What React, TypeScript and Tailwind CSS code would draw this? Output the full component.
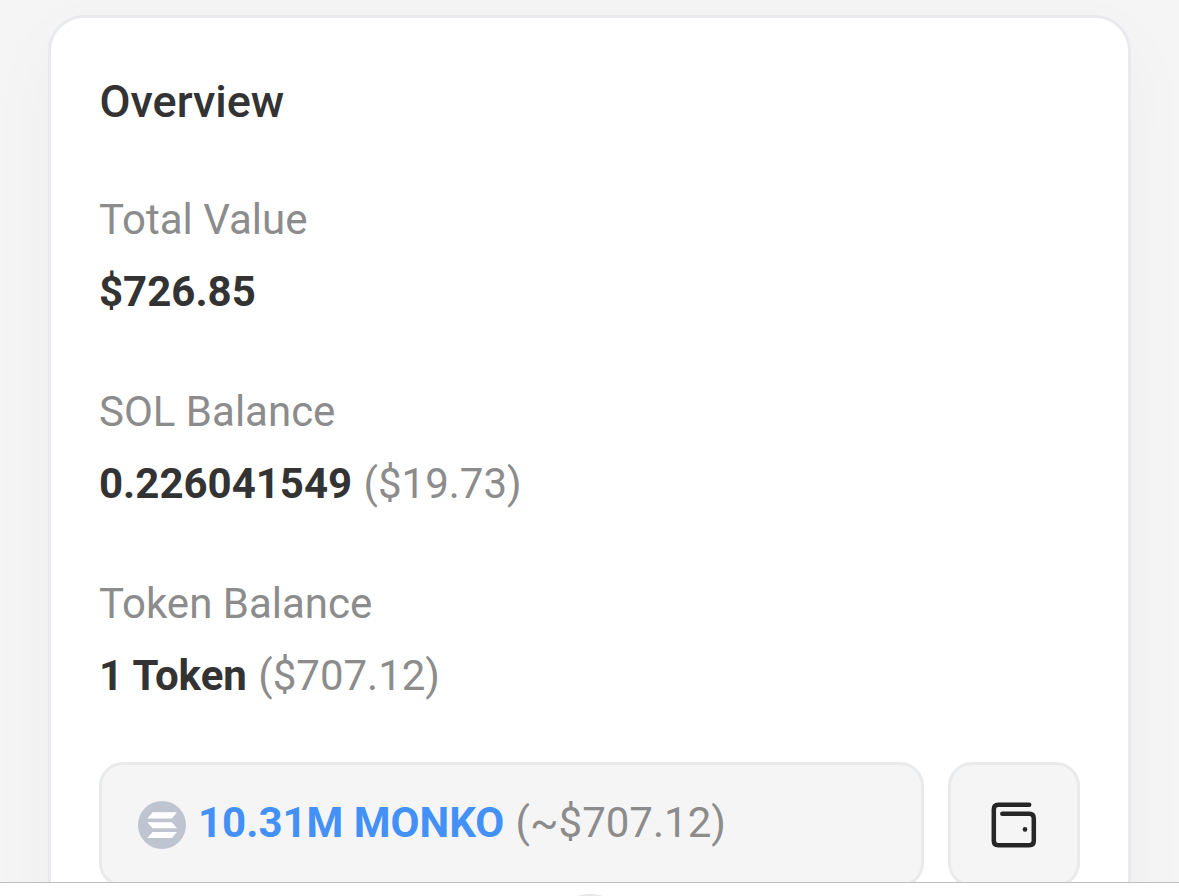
import type { ReactNode } from "react";

function SolanaIcon() {
  return (
    <svg width="48" height="48" viewBox="0 0 48 48" className="shrink-0">
      <circle cx="24" cy="24" r="24" fill="#bfc5d0" />
      <path
        fill="#fff"
        d="M14.6 11.2H39L33.8 17.4H9.4ZM9.4 21.2H33.8L39 27.2H14.6ZM14.6 30.9H39L33.8 37.1H9.4Z"
      />
    </svg>
  );
}

function WalletIcon() {
  return (
    <svg
      width="48"
      height="48"
      viewBox="0 0 48 48"
      fill="none"
      stroke="#262626"
      strokeWidth="4.5"
      strokeLinecap="round"
      strokeLinejoin="round"
    >
      <path d="M39.2 3.7H8.3Q3.8 3.7 3.8 8.2V39.7Q3.8 44.2 8.3 44.2H39.3Q43.8 44.2 43.8 39.7V17.2Q43.8 12.7 39.3 12.7H12.3" />
      <circle cx="35" cy="28.4" r="2.3" fill="#262626" stroke="none" />
    </svg>
  );
}

function Stat({ label, value, note }: { label: string; value: string; note?: string }) {
  return (
    <div className="flex flex-col text-[42px] leading-[72px]">
      <span className="text-[#8c8c8c]">{label}</span>
      <div className="text-[#8c8c8c]">
        <span className="mr-px font-bold text-[#333333]">{value}</span>
        {note ? ` ${note}` : ""}
      </div>
    </div>
  );
}

function Box({ className, children }: { className: string; children: ReactNode }) {
  return (
    <div className={`flex h-[125px] items-center rounded-[24px] border-3 border-[#e9eaec] bg-[#f5f5f5] ${className}`}>
      {children}
    </div>
  );
}

export default function App() {
  return (
    <div className="flex h-[896px] w-[1179px] flex-col overflow-hidden bg-white font-[Roboto,sans-serif]">
      <main className="h-[882px] shrink-0 overflow-hidden bg-[#f5f5f5] pt-[15px]">
        <section className="ml-[48px] h-[1000px] w-[1083px] rounded-[36px] border-3 border-[#e9eaee] bg-white px-[48px] shadow-[0_24px_72px_rgba(18,38,63,0.035)]">
          <h1 className="mt-[56px] pl-[0.5px] text-[45px] leading-[56px] font-medium text-[#333333]">Overview</h1>
          <div className="mt-[54px] flex flex-col gap-[48px]">
            <Stat label="Total Value" value="$726.85" />
            <Stat label="SOL Balance" value="0.226041549" note="($19.73)" />
            <Stat label="Token Balance" value="1 Token" note="($707.12)" />
          </div>
          <div className="mt-[50px] flex gap-[24px]">
            <Box className="w-[825px] gap-[12px] pl-[36px]">
              <SolanaIcon />
              <div className="pb-[4px] text-[42px] leading-[60px] text-[#8c8c8c]">
                <span className="mr-px font-bold text-[#4390f7]">10.31M MONKO</span> (~$707.12)
              </div>
            </Box>
            <Box className="w-[132px] justify-center">
              <WalletIcon />
            </Box>
          </div>
        </section>
      </main>
      <footer className="flex h-[14px] shrink-0 justify-center overflow-hidden border-t border-[#bfbfbf] bg-white pt-[11px]">
        <div className="size-[90px] shrink-0 rounded-full bg-[#e8e8e8]" />
      </footer>
    </div>
  );
}
